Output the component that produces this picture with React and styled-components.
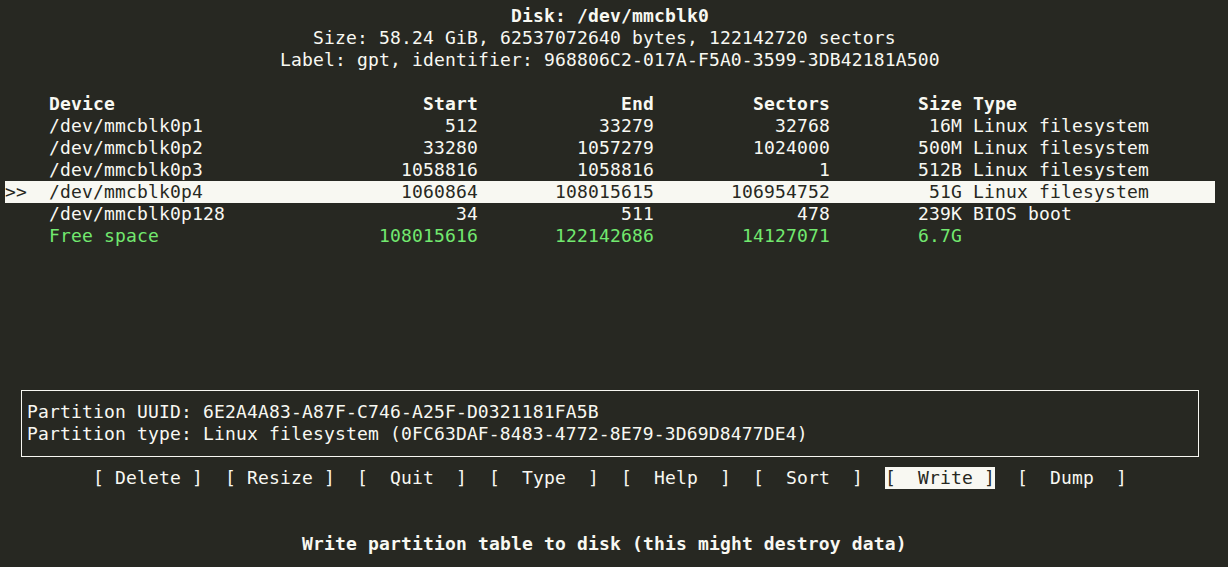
import React from "react";
import styled, { createGlobalStyle, css } from "styled-components";

const CELL = 11;
const ROW = 22;
const BG = "#272822";
const FG = "#f8f8f2";
const GREEN = "#72e96f";

const GlobalStyle = createGlobalStyle`
  html, body {
    margin: 0;
    padding: 0;
    background: ${BG};
  }
  body {
    width: 1228px;
    height: 567px;
    overflow: hidden;
  }
`;

const Screen = styled.div`
  width: ${110 * CELL}px;
  padding: 5px;
  font-family: "DejaVu Sans Mono", "Liberation Mono", monospace;
  font-size: 18px;
  letter-spacing: 0.16px;
  line-height: ${ROW}px;
  color: ${FG};
  display: flex;
  flex-direction: column;
`;

// a terminal line; `col` is the column where the text starts
const Line = styled.div`
  height: ${ROW}px;
  white-space: pre;
  padding-left: ${(p) => (p.col || 0) * CELL}px;
  font-weight: ${(p) => (p.bold ? 700 : 400)};
`;

const Spacer = styled.div`
  height: ${(p) => p.rows * ROW}px;
  flex-shrink: 0;
`;

const TableRow = styled.div`
  height: ${ROW}px;
  white-space: pre;
  display: grid;
  grid-template-columns:
    ${4 * CELL}px ${22 * CELL}px ${17 * CELL}px ${16 * CELL}px
    ${16 * CELL}px ${12 * CELL}px ${23 * CELL}px;
  ${(p) =>
    p.head &&
    css`
      font-weight: 700;
    `}
  ${(p) =>
    p.free &&
    css`
      color: ${GREEN};
    `}
  ${(p) =>
    p.selected &&
    css`
      background: ${FG};
      color: ${BG};
    `}
`;

const Cell = styled.span`
  text-align: ${(p) => (p.right ? "right" : "left")};
  padding-left: ${(p) => (p.indent ? CELL : 0)}px;
  overflow: hidden;
`;

const InfoArea = styled.div`
  height: ${4 * ROW}px;
  flex-shrink: 0;
`;

const InfoBox = styled.div`
  box-sizing: border-box;
  margin: 11px 0 0 16px;
  width: 1178px;
  height: 67px;
  border: 1px solid ${FG};
  padding: 10px 0 11px 5px;
  white-space: pre;
`;

const InfoLine = styled.div`
  height: ${ROW}px;
`;

const ButtonBar = styled.div`
  height: ${ROW}px;
  display: flex;
  gap: ${2 * CELL}px;
  padding-left: ${8 * CELL}px;
  white-space: pre;
`;

const Button = styled.span`
  width: ${10 * CELL}px;
  ${(p) =>
    p.active &&
    css`
      background: ${FG};
      color: ${BG};
    `}
`;

const partitions = [
  { dev: "/dev/mmcblk0p1", start: "512", end: "33279", sectors: "32768", size: "16M", type: "Linux filesystem" },
  { dev: "/dev/mmcblk0p2", start: "33280", end: "1057279", sectors: "1024000", size: "500M", type: "Linux filesystem" },
  { dev: "/dev/mmcblk0p3", start: "1058816", end: "1058816", sectors: "1", size: "512B", type: "Linux filesystem" },
  { dev: "/dev/mmcblk0p4", start: "1060864", end: "108015615", sectors: "106954752", size: "51G", type: "Linux filesystem", selected: true },
  { dev: "/dev/mmcblk0p128", start: "34", end: "511", sectors: "478", size: "239K", type: "BIOS boot" },
  { dev: "Free space", start: "108015616", end: "122142686", sectors: "14127071", size: "6.7G", type: "", free: true },
];

const buttons = [
  "[ Delete ]",
  "[ Resize ]",
  "[  Quit  ]",
  "[  Type  ]",
  "[  Help  ]",
  "[  Sort  ]",
  "[  Write ]",
  "[  Dump  ]",
];

export default function App() {
  return (
    <>
      <GlobalStyle />
      <Screen>
        <Line col={46} bold>Disk: /dev/mmcblk0</Line>
        <Line col={28}>Size: 58.24 GiB, 62537072640 bytes, 122142720 sectors</Line>
        <Line col={25}>Label: gpt, identifier: 968806C2-017A-F5A0-3599-3DB42181A500</Line>
        <Spacer rows={1} />

        <TableRow head>
          <Cell />
          <Cell>Device</Cell>
          <Cell right>Start</Cell>
          <Cell right>End</Cell>
          <Cell right>Sectors</Cell>
          <Cell right>Size</Cell>
          <Cell indent>Type</Cell>
        </TableRow>
        {partitions.map((p) => (
          <TableRow key={p.dev} selected={p.selected} free={p.free}>
            <Cell>{p.selected ? ">>" : ""}</Cell>
            <Cell>{p.dev}</Cell>
            <Cell right>{p.start}</Cell>
            <Cell right>{p.end}</Cell>
            <Cell right>{p.sectors}</Cell>
            <Cell right>{p.size}</Cell>
            <Cell indent>{p.type}</Cell>
          </TableRow>
        ))}
        <Spacer rows={6} />

        <InfoArea>
          <InfoBox>
            <InfoLine>Partition UUID: 6E2A4A83-A87F-C746-A25F-D0321181FA5B</InfoLine>
            <InfoLine>Partition type: Linux filesystem (0FC63DAF-8483-4772-8E79-3D69D8477DE4)</InfoLine>
          </InfoBox>
        </InfoArea>

        <ButtonBar>
          {buttons.map((b) => (
            <Button key={b} active={b.includes("Write")}>
              {b}
            </Button>
          ))}
        </ButtonBar>
        <Spacer rows={2} />
        <Line col={27} bold>Write partition table to disk (this might destroy data)</Line>
      </Screen>
    </>
  );
}
